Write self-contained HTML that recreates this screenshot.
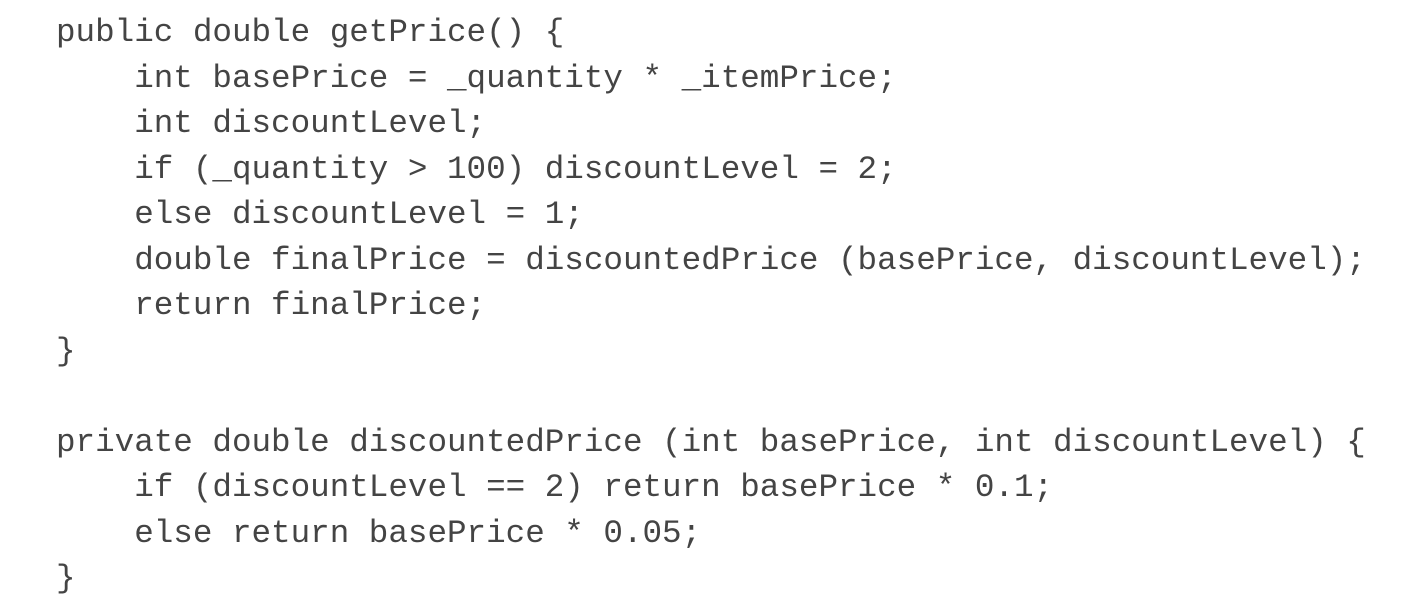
<!DOCTYPE html>
<html><head><meta charset="utf-8"><style>
html,body{margin:0;padding:0;background:#fff;width:1422px;height:616px;overflow:hidden}
pre{margin:0;position:absolute;left:56px;top:10px;font-family:"Liberation Mono",monospace;font-size:32.6px;line-height:45.5px;color:#444;letter-spacing:0}
</style></head><body>
<pre>public double getPrice() {
    int basePrice = _quantity * _itemPrice;
    int discountLevel;
    if (_quantity &gt; 100) discountLevel = 2;
    else discountLevel = 1;
    double finalPrice = discountedPrice (basePrice, discountLevel);
    return finalPrice;
}

private double discountedPrice (int basePrice, int discountLevel) {
    if (discountLevel == 2) return basePrice * 0.1;
    else return basePrice * 0.05;
}</pre>
</body></html>
